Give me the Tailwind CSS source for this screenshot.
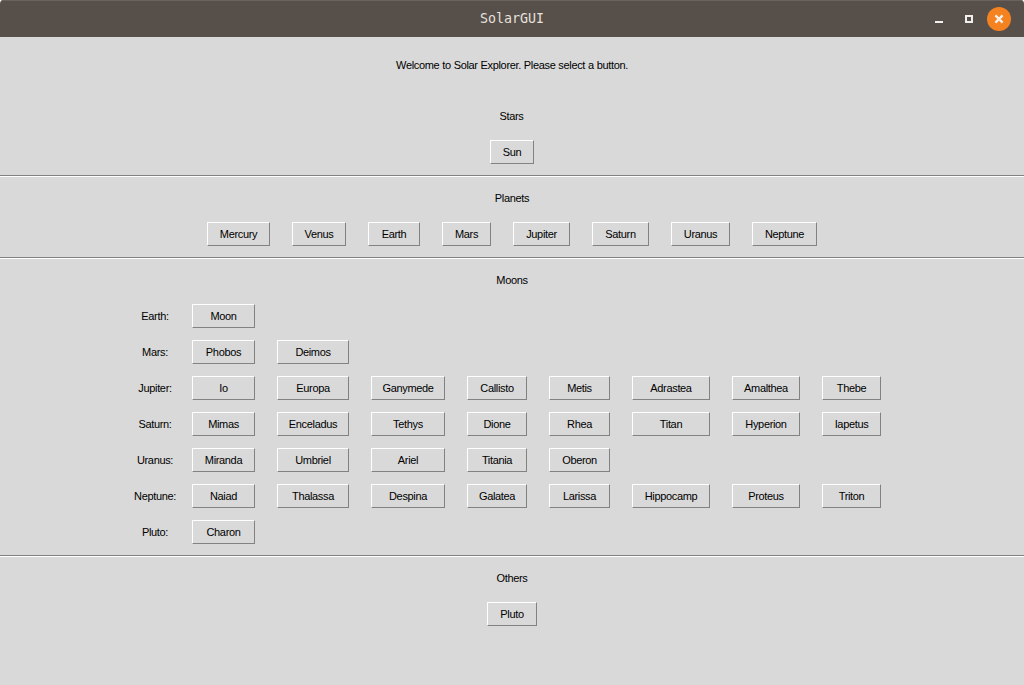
<!DOCTYPE html>
<html lang="en">
<head>
<meta charset="utf-8">
<title>SolarGUI</title>
<script src="https://cdn.jsdelivr.net/npm/@tailwindcss/browser@4"></script>
</head>
<body class="w-[1024px] h-[685px] overflow-hidden bg-white">
<div class="w-full h-full flex flex-col bg-[#d9d9d9] rounded-t-[4px] overflow-hidden font-['Liberation_Sans',sans-serif] text-[11px] leading-[14px] tracking-[-0.34px] [word-spacing:0.2px] text-black">
  <header class="relative h-[37px] shrink-0 bg-[#574f4a] border-t border-[#6a625e] flex items-center justify-center">
    <h1 class="font-['DejaVu_Sans_Mono','Liberation_Mono',monospace] text-[13.3px] leading-[16px] tracking-[0px] [word-spacing:0px] text-[#e6e2da]">SolarGUI</h1>
    <div class="absolute right-[13px] top-[6px] flex items-center">
      <svg class="w-6 h-6 mr-[6px]" viewBox="0 0 24 24"><path d="M8 14h8v2H8z" fill="#f2f0ee"/></svg>
      <svg class="w-6 h-6 mr-[6px]" viewBox="0 0 24 24"><path d="M9 9h6v6H9z" fill="none" stroke="#f2f0ee" stroke-width="2"/></svg>
      <svg class="w-6 h-6" viewBox="0 0 24 24"><circle cx="12" cy="12" r="12" fill="#f58220"/><path d="M8.4 8.4l7.2 7.2M15.6 8.4l-7.2 7.2" stroke="#f6f0eb" stroke-width="2.3"/></svg>
    </div>
  </header>
  <main class="flex flex-col">
    <section class="h-[138px] flex flex-col items-center pt-[21px]">
      <p>Welcome to Solar Explorer. Please select a button.</p>
      <h2 class="mt-[37px] -ml-px">Stars</h2>
      <button class="mt-[17px] w-[44px] h-[24px] border border-t-white border-l-white border-r-[#828282] border-b-[#828282]">Sun</button>
    </section>
    <div class="h-[2px] bg-white border-t border-[#828282]"></div>
    <section class="h-[80px] flex flex-col items-center pt-[14px]">
      <h2>Planets</h2>
      <div class="mt-[17px] flex gap-[22px] *:h-[24px] *:border *:border-t-white *:border-l-white *:border-r-[#828282] *:border-b-[#828282]">
        <button class="w-[63px]">Mercury</button>
        <button class="w-[54px]">Venus</button>
        <button class="w-[52px]">Earth</button>
        <button class="w-[49px]">Mars</button>
        <button class="w-[57px]">Jupiter</button>
        <button class="w-[57px]">Saturn</button>
        <button class="w-[59px]">Uranus</button>
        <button class="w-[65px]">Neptune</button>
      </div>
    </section>
    <div class="h-[2px] bg-white border-t border-[#828282]"></div>
    <section class="h-[296px] flex flex-col items-center pt-[14px]">
      <h2>Moons</h2>
      <div class="mt-[17px] grid grid-cols-[30px_63px_72px_74px_60px_61px_78px_68px_59px] gap-x-[22px] gap-y-3 w-[741px] mr-[3px] items-center text-center [&>span]:w-[42px] [&>span]:-ml-[6px] [&>button]:h-[24px] [&>button]:border [&>button]:border-t-white [&>button]:border-l-white [&>button]:border-r-[#828282] [&>button]:border-b-[#828282]">
        <span class="col-start-1 whitespace-nowrap">Earth:</span><button>Moon</button>
        <span class="col-start-1 whitespace-nowrap">Mars:</span><button>Phobos</button><button>Deimos</button>
        <span class="col-start-1 whitespace-nowrap">Jupiter:</span><button>Io</button><button>Europa</button><button>Ganymede</button><button>Callisto</button><button>Metis</button><button>Adrastea</button><button>Amalthea</button><button>Thebe</button>
        <span class="col-start-1 whitespace-nowrap">Saturn:</span><button>Mimas</button><button>Enceladus</button><button>Tethys</button><button>Dione</button><button>Rhea</button><button>Titan</button><button>Hyperion</button><button>Iapetus</button>
        <span class="col-start-1 whitespace-nowrap">Uranus:</span><button>Miranda</button><button>Umbriel</button><button>Ariel</button><button>Titania</button><button>Oberon</button>
        <span class="col-start-1 whitespace-nowrap">Neptune:</span><button>Naiad</button><button>Thalassa</button><button>Despina</button><button>Galatea</button><button>Larissa</button><button>Hippocamp</button><button>Proteus</button><button>Triton</button>
        <span class="col-start-1 whitespace-nowrap">Pluto:</span><button>Charon</button>
      </div>
    </section>
    <div class="h-[2px] bg-white border-t border-[#828282]"></div>
    <section class="flex flex-col items-center pt-[14px]">
      <h2>Others</h2>
      <button class="mt-[17px] w-[50px] h-[24px] border border-t-white border-l-white border-r-[#828282] border-b-[#828282]">Pluto</button>
    </section>
  </main>
</div>
</body>
</html>
